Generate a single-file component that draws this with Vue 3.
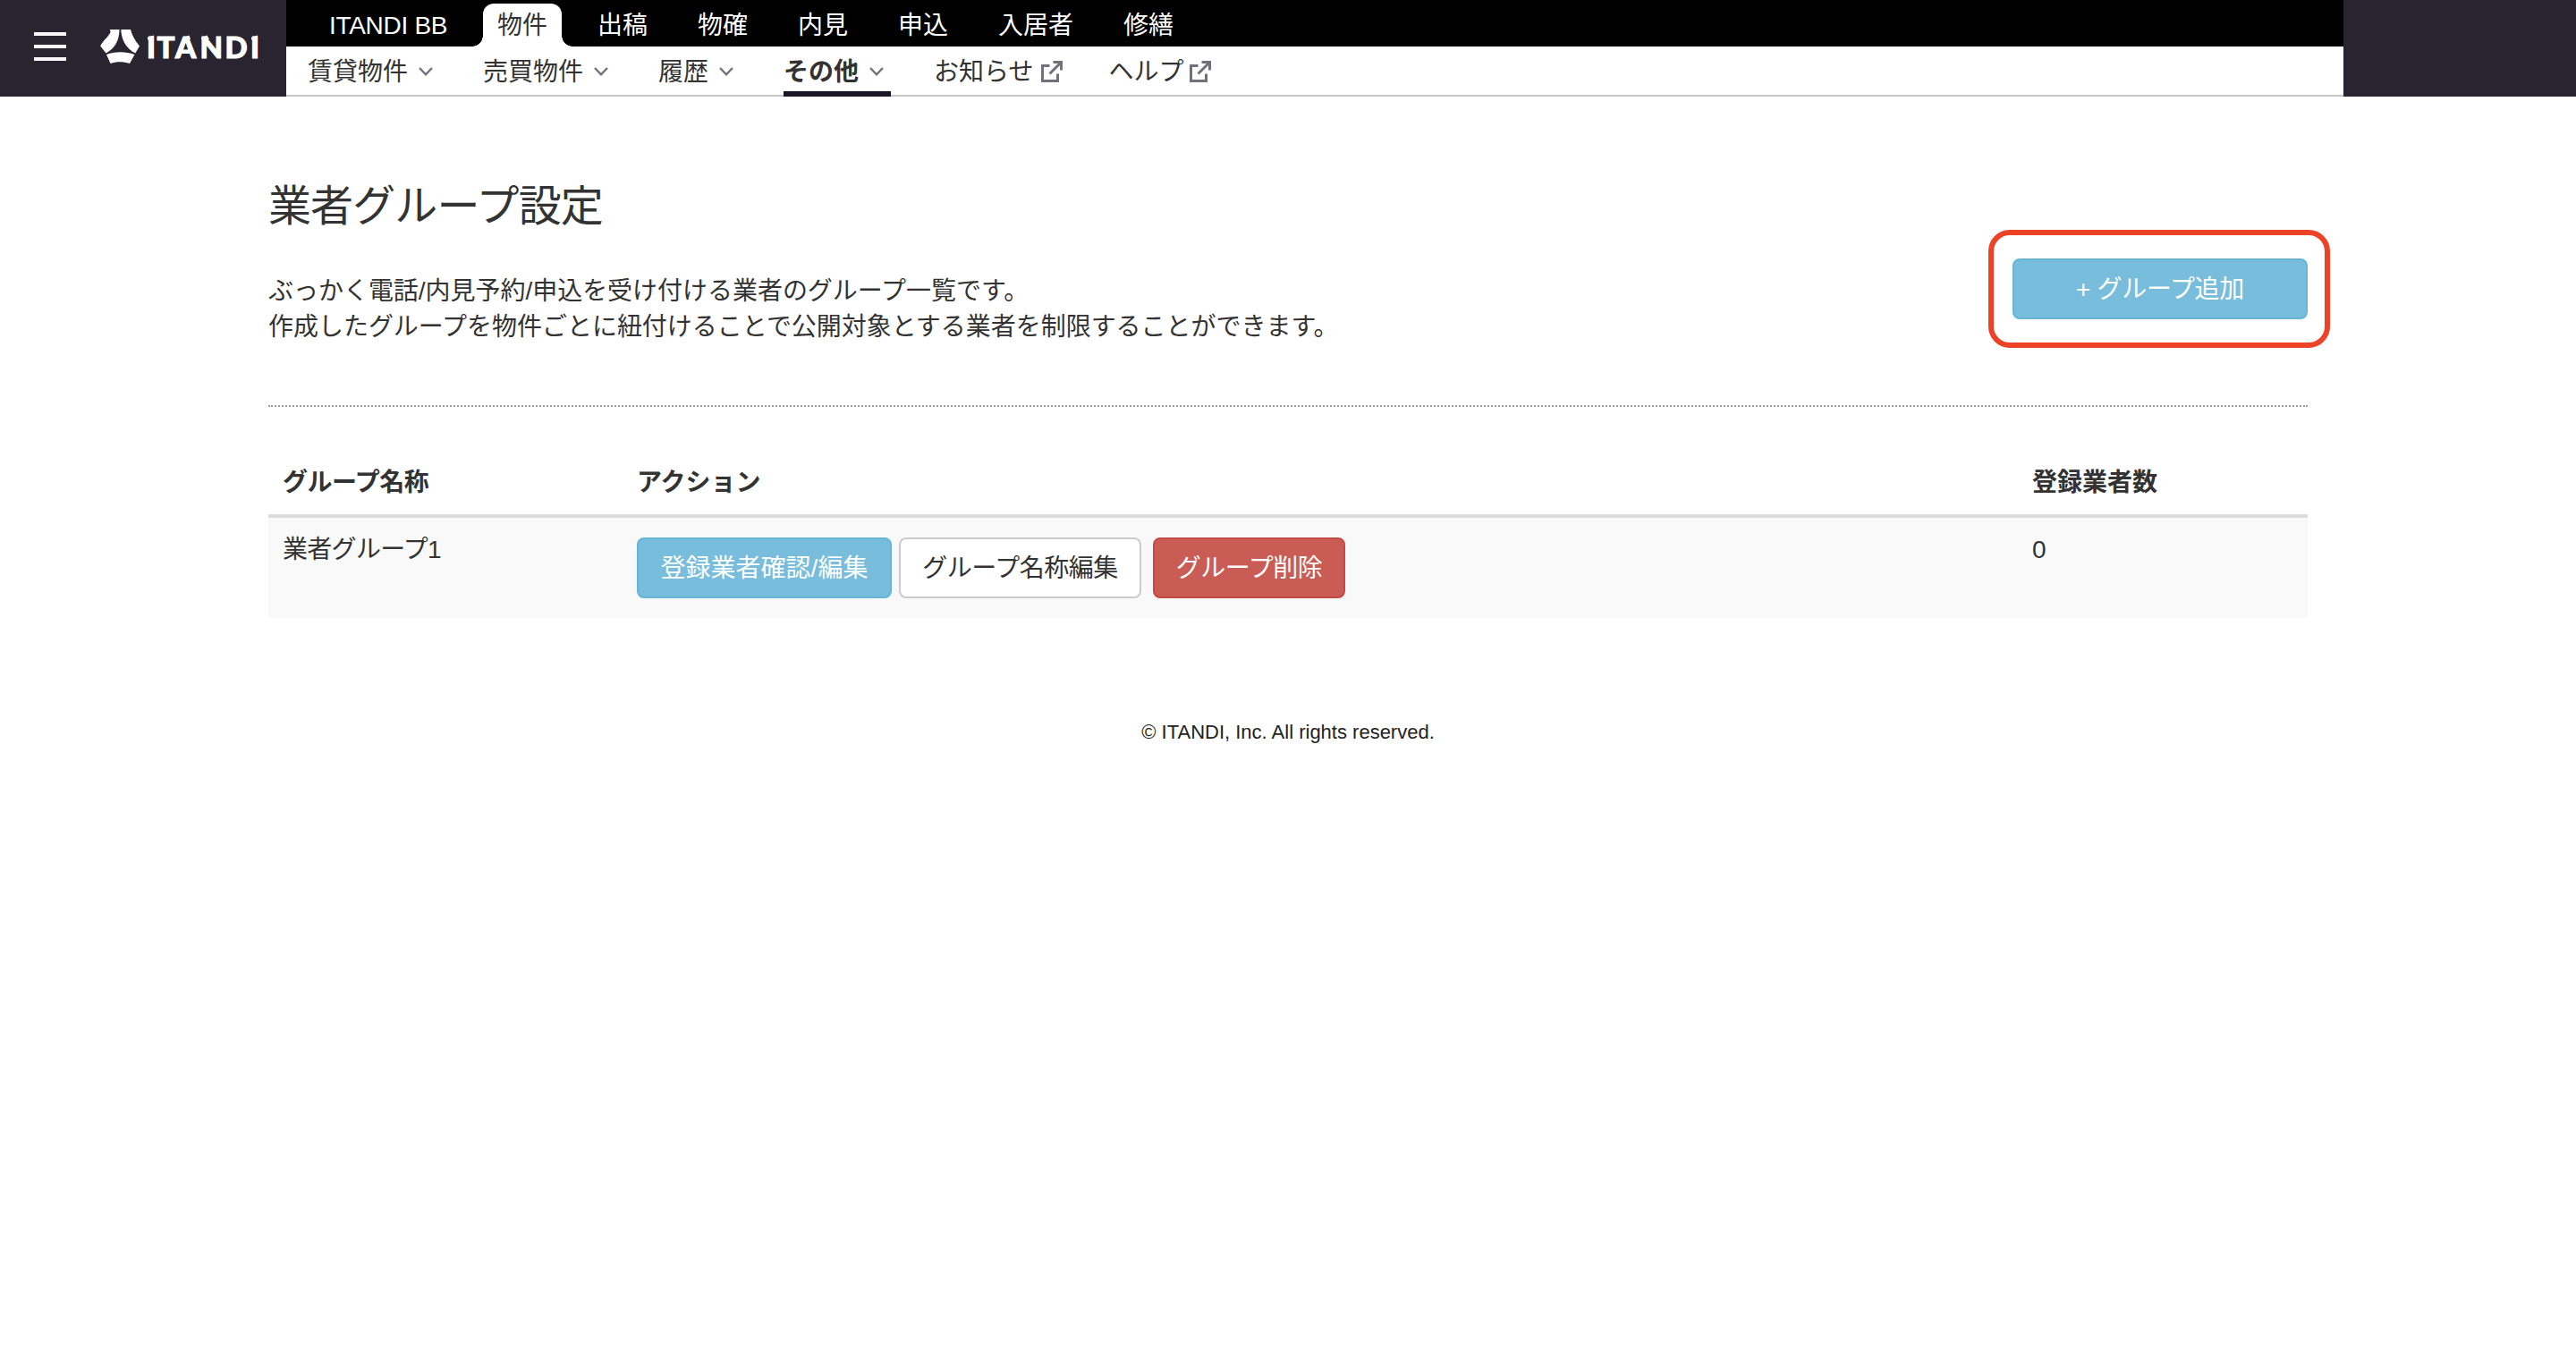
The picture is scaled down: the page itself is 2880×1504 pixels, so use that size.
<template>
  <div class="page">
    <header class="header">
      <div class="brand">
        <div class="menu"><span></span><span></span><span></span></div>
        <svg class="logo" width="180" height="44" viewBox="0 0 180 44">
          <g fill="#fff">
            <path d="M11 3H21.5C21.3 14 17.5 23.500 6.500 29.500L.2 21.500C2.500 16 8.500 12 11.500 6.200Z" />
            <path d="M23.300 3H34C35.500 9 38.500 15 44 21.500L39.300 29.500C29 24.500 23.500 14 23.300 3Z" />
            <path d="M7 31C16 27.200 29 27.200 38.500 31L33 41C26 39 18.500 38.500 11.500 41Z" />
            <path d="M53 14.500V11.800L60 9.500V13Z" />
            <path d="M92.500 12.500L99.500 9.500L101 14H94Z" />
            <path d="M113 13.500V12L119.500 9.500L122 14H114Z" />
            <path d="M169 14.500V11.800L176 9.500V13Z" />
          </g>
          <text x="52 63.500 84 111.500 139.500 168" y="35">ITANDI</text>
        </svg>
      </div>
      <nav class="nav">
        <div class="services">
          <a
            v-for="service in services"
            :key="service"
            :class="{ active: service === '物件' }"
            >{{ service }}</a
          >
        </div>
        <div class="menus">
          <a
            v-for="item in menus"
            :key="item.name"
            :class="{ current: item.current }"
          >
            <span>{{ item.name }}</span>
            <svg v-if="item.external" class="external" width="24" height="24" viewBox="0 0 24 24">
              <path d="M9.500 5.500H1.500V22.500H18.500V14.500" />
              <path d="M13.500 1.500H22.500V10.500M22 2L9.500 14.500" />
            </svg>
            <svg v-else class="chevron" width="16" height="10" viewBox="0 0 16 10">
              <path d="M1 1L8 8.300L15 1" />
            </svg>
          </a>
        </div>
      </nav>
    </header>

    <main class="main">
      <div class="intro">
        <div>
          <h1>業者グループ設定</h1>
          <p>ぶっかく電話/内見予約/申込を受け付ける業者のグループ一覧です。</p>
          <p>作成したグループを物件ごとに紐付けることで公開対象とする業者を制限することができます。</p>
        </div>
        <div class="highlight">
          <button class="btn info add">+ グループ追加</button>
        </div>
      </div>

      <table>
        <thead>
          <tr>
            <th class="name">グループ名称</th>
            <th class="action">アクション</th>
            <th>登録業者数</th>
          </tr>
        </thead>
        <tbody>
          <tr v-for="group in groups" :key="group.name">
            <td class="group">{{ group.name }}</td>
            <td>
              <div class="buttons">
                <button class="btn info check">登録業者確認/編集</button>
                <button class="btn edit">グループ名称編集</button>
                <button class="btn danger">グループ削除</button>
              </div>
            </td>
            <td>{{ group.count }}</td>
          </tr>
        </tbody>
      </table>
    </main>

    <footer>© ITANDI, Inc. All rights reserved.</footer>
  </div>
</template>

<script setup>
import { ref } from "vue";

const services = [
  "ITANDI BB",
  "物件",
  "出稿",
  "物確",
  "内見",
  "申込",
  "入居者",
  "修繕",
];

const menus = [
  { name: "賃貸物件" },
  { name: "売買物件" },
  { name: "履歴" },
  { name: "その他", current: true },
  { name: "お知らせ", external: true },
  { name: "ヘルプ", external: true },
];

const groups = ref([{ name: "業者グループ1", count: 0 }]);
</script>

<style>
body {
  margin: 0;
  background: #fff;
}
</style>

<style scoped>
.page {
  min-height: 1504px;
  color: #333;
  font-family: "Liberation Sans", "Noto Sans CJK JP", sans-serif;
  font-size: 28px;
  line-height: 40px;
}
.header {
  display: flex;
  height: 108px;
  background: #282430;
}
.brand {
  display: flex;
  box-sizing: border-box;
  width: 320px;
  padding: 30px 0 0 38px;
}
.menu {
  display: flex;
  flex-direction: column;
  gap: 10px;
  width: 36px;
  margin: 6px 38px 0 0;
}
.menu span {
  height: 4px;
  background: #f8f8fb;
}
.logo text {
  fill: #fff;
  stroke: #fff;
  stroke-width: 1.1;
  font-family: Lato, sans-serif;
  font-weight: 900;
  font-size: 33px;
}
.nav {
  width: 2300px;
  background: #fff;
}
.services {
  display: flex;
  gap: 24px;
  box-sizing: border-box;
  height: 52px;
  padding: 4px 0 0 30px;
  background: #000;
}
.services a {
  height: 48px;
  padding: 0 16px;
  color: #fff;
  line-height: 50px;
}
.services a:first-child {
  width: 132px;
  padding-left: 18px;
  letter-spacing: -0.3px;
  white-space: nowrap;
}
.services .active {
  position: relative;
  border-radius: 12px 12px 0 0;
  background: #fff;
  color: #333;
}
.services .active::before,
.services .active::after {
  content: "";
  position: absolute;
  bottom: 0;
  width: 12px;
  height: 12px;
}
.services .active::before {
  right: 100%;
  background: radial-gradient(circle at 0 0, transparent 11.5px, #fff 12px);
}
.services .active::after {
  left: 100%;
  background: radial-gradient(circle at 100% 0, transparent 11.5px, #fff 12px);
}
.menus {
  display: flex;
  gap: 48px;
  box-sizing: border-box;
  height: 56px;
  padding-left: 24px;
  border-bottom: 2px solid #c5c4c9;
}
.menus a {
  display: flex;
  align-items: center;
  box-sizing: border-box;
  height: 56px;
  padding: 0 8px 0 0;
}
.menus span {
  padding-top: 2px;
}
.menus .current {
  border-bottom: 6px solid #1b1526;
  padding-top: 6px;
  font-weight: bold;
}
.menus svg {
  fill: none;
  stroke: #72707a;
}
.chevron {
  margin-left: 12px;
  stroke-width: 2.4;
}
.external {
  margin: 0 -4px 0 8px;
  stroke-width: 3;
}
.menus a:last-child .external {
  margin-left: 6px;
}
.main {
  width: 2280px;
  margin: 0 300px;
}
.intro {
  display: flex;
  justify-content: space-between;
  box-sizing: border-box;
  height: 347px;
  padding-top: 91px;
  border-bottom: 2px dotted #999;
}
h1 {
  margin: 2px 0 45px;
  font-weight: normal;
  font-size: 48px;
  line-height: 60px;
  letter-spacing: -0.9px;
}
p {
  margin: 0;
  letter-spacing: -0.03px;
}
.highlight {
  box-sizing: border-box;
  width: 382px;
  height: 132px;
  margin: 58px -25px 0 0;
  padding: 26px 0 0 21px;
  border: 6px solid #ec4226;
  border-radius: 24px;
}
.btn {
  display: block;
  box-sizing: border-box;
  height: 68px;
  padding: 1px 0 0;
  border: 2px solid #ccc;
  border-radius: 8px;
  background: #fff;
  color: #333;
  font: inherit;
  white-space: nowrap;
}
.info {
  border-color: #66b5d7;
  background: #78bddc;
  color: #fff;
}
.danger {
  width: 215px;
  margin-left: 5px;
  border-color: #c64a43;
  background: #c95c55;
  color: #fff;
  letter-spacing: -0.5px;
}
.add {
  width: 330px;
  letter-spacing: -0.3px;
}
.check {
  width: 285px;
}
.edit {
  width: 271px;
  letter-spacing: -0.5px;
}
table {
  width: 100%;
  margin-top: 46px;
  border-collapse: separate;
  border-spacing: 0;
  table-layout: fixed;
}
th {
  box-sizing: border-box;
  height: 78px;
  padding: 4px 16px 0;
  border-bottom: 4px solid #ddd;
  text-align: left;
}
.name {
  width: 396px;
  letter-spacing: -0.5px;
}
.action {
  width: 1560px;
}
td {
  box-sizing: border-box;
  height: 112px;
  padding: 16px;
  background: #f9f9f9;
  vertical-align: top;
}
.group {
  letter-spacing: -0.7px;
}
.buttons {
  display: flex;
  gap: 8px;
  padding-top: 6px;
}
footer {
  margin-top: 108px;
  color: #222;
  font-size: 22px;
  text-align: center;
}
</style>
